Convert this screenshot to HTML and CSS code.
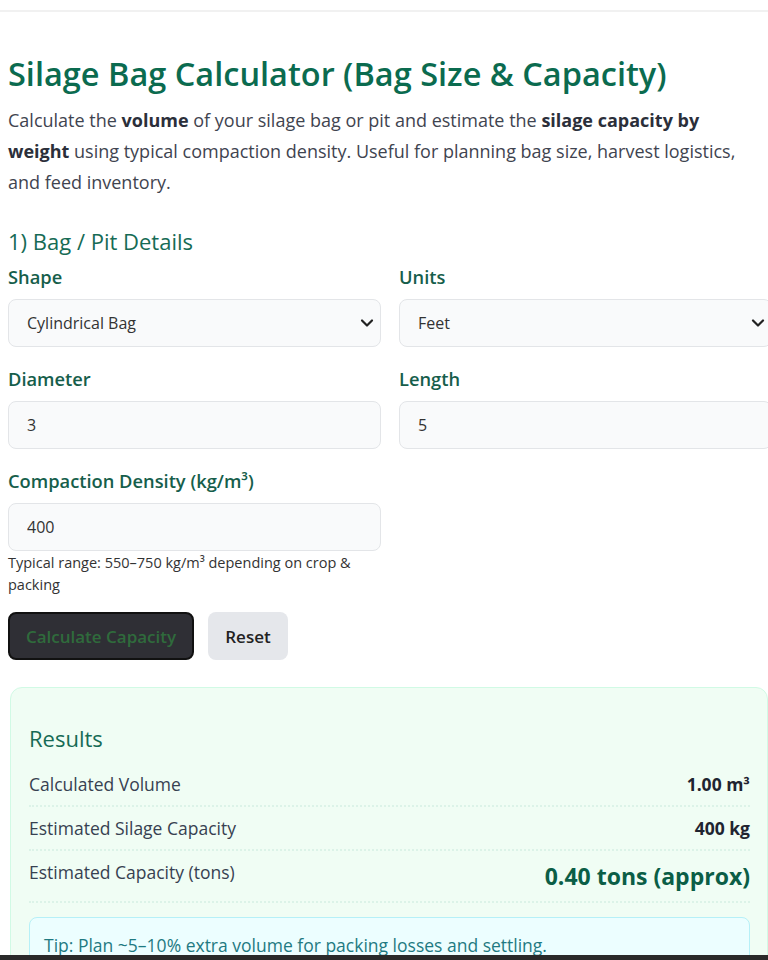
FILE: index.html
```html
<!DOCTYPE html>
<html lang="en">
<head>
  <meta charset="UTF-8">
  <meta name="viewport" content="width=device-width, initial-scale=1.0">
  <title>Silage Bag Calculator</title>
  <link rel="stylesheet" href="styles.css">
</head>
<body>

<div class="topbar"></div>

<div id="calc">
  <h1>Silage Bag Calculator (Bag Size &amp; Capacity)</h1>
  <p class="intro">Calculate the <strong>volume</strong> of your silage bag or pit and estimate the <strong>silage capacity by</strong> <strong>weight</strong> using typical compaction density. Useful for planning bag size, harvest logistics, and feed inventory.</p>

  <h2>1) Bag / Pit Details</h2>

  <div class="grid">
    <div class="field">
      <label for="shape">Shape</label>
      <select id="shape">
        <option>Cylindrical Bag</option>
        <option>Rectangular Pit</option>
      </select>
    </div>
    <div class="field">
      <label for="units">Units</label>
      <select id="units">
        <option>Feet</option>
        <option>Meters</option>
      </select>
    </div>
    <div class="field">
      <label for="diameter">Diameter</label>
      <input id="diameter" type="number" value="3">
    </div>
    <div class="field">
      <label for="length">Length</label>
      <input id="length" type="number" value="5">
    </div>
    <div class="field">
      <label for="density">Compaction Density (kg/m³)</label>
      <input id="density" type="number" value="400">
      <small>Typical range: 550–750 kg/m³ depending on crop &amp; packing</small>
    </div>
  </div>

  <div class="actions">
    <button class="btn-primary" onclick="calculate()">Calculate Capacity</button>
    <button class="btn-secondary" onclick="resetForm()">Reset</button>
  </div>

  <div class="results">
    <h2>Results</h2>
    <div class="row">
      <span>Calculated Volume</span>
      <strong id="volume">1.00 m³</strong>
    </div>
    <div class="row">
      <span>Estimated Silage Capacity</span>
      <strong id="kg">400 kg</strong>
    </div>
    <div class="row">
      <span>Estimated Capacity (tons)</span>
      <strong class="big" id="tons">0.40 tons (approx)</strong>
    </div>
    <div class="tip">Tip: Plan ~5–10% extra volume for packing losses and settling.</div>
  </div>
</div>

<div class="taskbar"></div>

<script>
  function calculate() {
    const d = parseFloat(document.getElementById('diameter').value) || 0;
    const l = parseFloat(document.getElementById('length').value) || 0;
    const density = parseFloat(document.getElementById('density').value) || 0;
    const feet = document.getElementById('units').value === 'Feet';
    const toM = feet ? 0.3048 : 1;
    const r = (d * toM) / 2;
    const vol = Math.PI * r * r * l * toM;
    const kg = vol * density;
    document.getElementById('volume').textContent = vol.toFixed(2) + ' m³';
    document.getElementById('kg').textContent = Math.round(kg) + ' kg';
    document.getElementById('tons').textContent = (kg / 1000).toFixed(2) + ' tons (approx)';
  }

  function resetForm() {
    document.getElementById('diameter').value = '';
    document.getElementById('length').value = '';
    document.getElementById('density').value = '';
  }
</script>

</body>
</html>
```

FILE: styles.css
```css
html, body {
  overflow-x: hidden;
}

body {
  margin: 0;
  font-family: 'Open Sans', 'Noto Sans', sans-serif;
  color: #374151;
  background: #fff;
}

.topbar {
  height: 10px;
  border-bottom: 2px solid #f1f1f1;
}

#calc {
  width: 764px;
  padding: 0 0 0 8px;
}

h1 {
  margin: 41px 0 10px;
  font-size: 32.5px;
  font-weight: 600;
  color: #0b6b4f;
  line-height: 1.3;
  white-space: nowrap;
}

.intro {
  margin: 0;
  max-width: 748px;
  font-size: 18px;
  line-height: 31px;
  color: #3f4450;
}

.intro strong {
  color: #2b2f3a;
}

h2 {
  margin: 28px 0 8px;
  font-size: 22px;
  font-weight: 400;
  color: #166b55;
}

.grid {
  display: grid;
  grid-template-columns: 373px 373px;
  column-gap: 18px;
  row-gap: 19px;
}

.field {
  display: flex;
  flex-direction: column;
}

label {
  font-size: 18.3px;
  line-height: 25px;
  font-weight: 600;
  color: #165e4b;
  margin-bottom: 10px;
}

select,
input {
  height: 48px;
  box-sizing: border-box;
  border: 1.5px solid #e3e5e8;
  border-radius: 8px;
  background-color: #f9fafb;
  padding: 0 18px;
  font-family: inherit;
  font-size: 16px;
  color: #333;
}

select {
  appearance: none;
  background-image: url("data:image/svg+xml,%3Csvg xmlns='http://www.w3.org/2000/svg' width='14' height='10' viewBox='0 0 14 10'%3E%3Cpath d='M2 2.5l5 5 5-5' fill='none' stroke='%23222' stroke-width='2.2' stroke-linecap='round' stroke-linejoin='round'/%3E%3C/svg%3E");
  background-repeat: no-repeat;
  background-position: right 6px center;
}

input::-webkit-inner-spin-button,
input::-webkit-outer-spin-button {
  -webkit-appearance: none;
  margin: 0;
}

small {
  margin-top: 1px;
  font-size: 14.5px;
  line-height: 22px;
  color: #333;
}

.actions {
  display: flex;
  gap: 14px;
  margin-top: 16px;
}

.actions button {
  height: 48px;
  border-radius: 8px;
  font-family: inherit;
  font-size: 17px;
  font-weight: 600;
  cursor: pointer;
}

.btn-primary {
  width: 186px;
  background: #2f2f35;
  border: 2px solid #111;
  color: #2f6b3c;
}

.btn-secondary {
  width: 80px;
  background: #e5e7eb;
  border: none;
  color: #222;
}

.results {
  margin: 27px 0 0 2px;
  width: 758px;
  box-sizing: border-box;
  padding: 18px 17px 20px 18px;
  background: #f0fdf4;
  border: 1.5px solid #d1fae5;
  border-radius: 12px;
}

.results h2 {
  margin: 17px 0 10px;
}

.row {
  display: flex;
  justify-content: space-between;
  align-items: flex-start;
  padding: 9px 0;
  line-height: 24px;
  border-bottom: 2px dotted #dcf3e8;
  font-size: 17.5px;
}

.row strong {
  color: #1f2430;
  font-weight: 700;
}

.row strong.big {
  font-size: 23px;
  line-height: 32px;
  color: #0b5e46;
}

.tip {
  margin-top: 14px;
  padding: 15px 14px;
  background: #ecfeff;
  border: 1.5px solid #b6f0f7;
  border-radius: 8px;
  color: #1f7a82;
  font-size: 17.5px;
}

.taskbar {
  position: fixed;
  left: 0;
  right: 0;
  bottom: 0;
  height: 5px;
  background: #2a2a2a;
}
```
